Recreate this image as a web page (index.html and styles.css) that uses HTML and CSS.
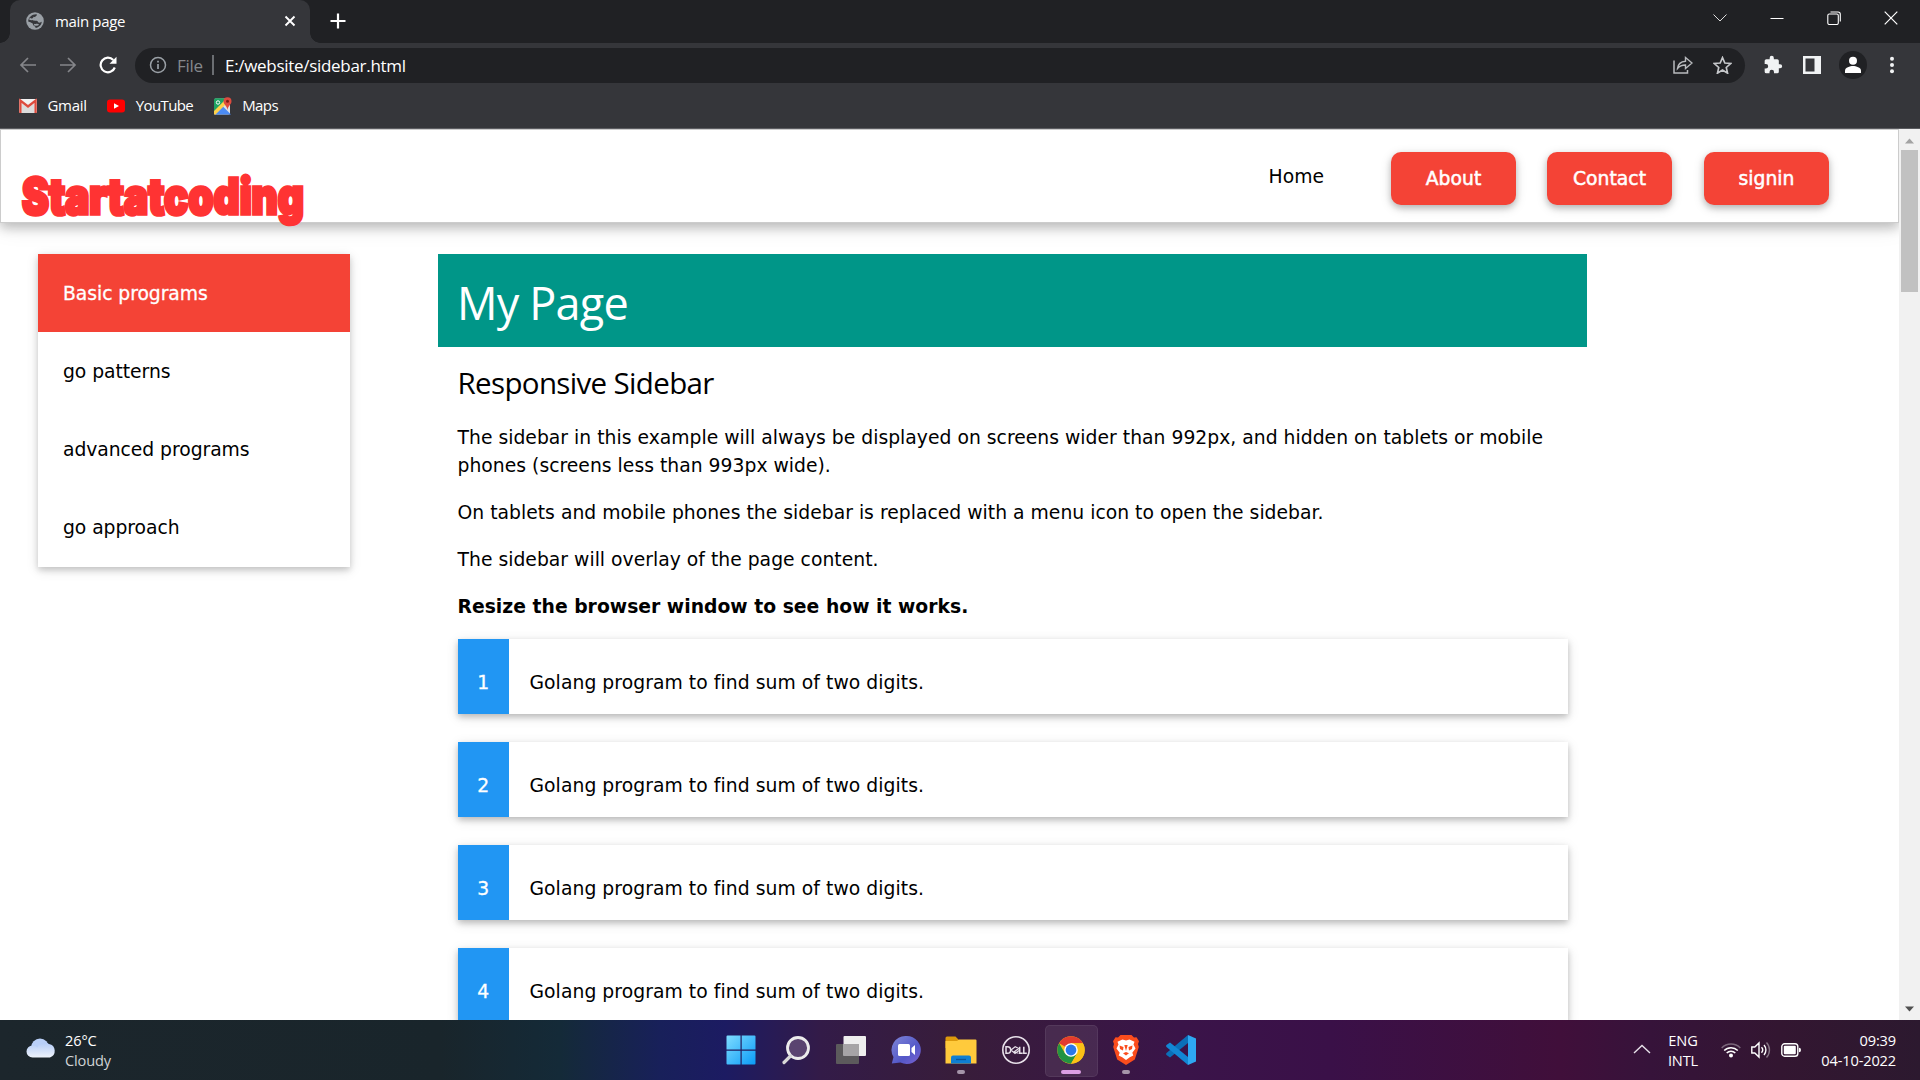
FILE: index.html
```html
<!DOCTYPE html>
<html lang="en">
<head>
<meta charset="utf-8">
<title>main page</title>
<link rel="stylesheet" href="styles.css">
</head>
<body>
<div class="tabstrip">
  <div class="tab">
    <svg class="globe" width="18" height="18" viewBox="0 0 18 18"><circle cx="9" cy="9" r="8.800" fill="#9aa0a6"/><path d="M10.500 2.200C12 3.500 9 4 9 5.500 9 6.800 6.800 6.200 6.500 8 6.800 9.200 11 8 11.800 9.500 12.500 11.500 15 10.500 15.800 9.500 15.500 13 13 15.500 9.500 15.900 10 14 7.500 14.500 7 12.500 6.800 10.500 4 10.500 2.200 9.500 2.200 5.500 6 2 10.500 2.200z" fill="#35363a"/><path d="M3.500 6.500C5 8 8 7.500 8.500 5M8 12.500c2 1 3-.5 4.500.5" fill="none" stroke="#9aa0a6" stroke-width="1.800"/></svg>
    <span class="tab-title">main page</span>
    <svg class="close" width="12" height="12" viewBox="0 0 12 12"><path d="M1.500 1.500l9 9M10.500 1.500l-9 9" stroke="#fff" stroke-width="1.900"/></svg>
  </div>
  <svg class="plus" width="16" height="16" viewBox="0 0 16 16"><path d="M8 .5v15M.5 8h15" stroke="#fff" stroke-width="2.200"/></svg>
  <div class="window-controls">
    <svg width="14" height="14" viewBox="0 0 14 14"><path d="M.5 3.500l6.500 6.500 6.500-6.500" stroke="#ddd" fill="none"/></svg>
    <svg width="14" height="14" viewBox="0 0 14 14"><path d="M.5 7.500h13" stroke="#fff"/></svg>
    <svg width="14" height="14" viewBox="0 0 14 14"><rect x=".8" y="3" width="10.500" height="10.500" rx="1.500" fill="none" stroke="#fff" stroke-width="1.100"/><path d="M3.500 1h7.500a2.300 2.300 0 0 1 2.300 2.300V10.500" fill="none" stroke="#fff" stroke-width="1.100"/></svg>
    <svg width="14" height="14" viewBox="0 0 14 14"><path d="M.7 .7l12.600 12.600M13.300 .7L.7 13.300" stroke="#fff" stroke-width="1.200"/></svg>
  </div>
</div>
<div class="toolbar">
  <div class="nav-icons">
    <svg width="18" height="18" viewBox="0 0 18 18"><path d="M17 9H2M9 2L2 9l7 7" fill="none" stroke="#85868a" stroke-width="1.700"/></svg>
    <svg width="18" height="18" viewBox="0 0 18 18"><path d="M1 9h15M9 2l7 7-7 7" fill="none" stroke="#85868a" stroke-width="1.700"/></svg>
    <svg width="18" height="18" viewBox="0 0 18 18"><path d="M15.800 11.500A7.300 7.300 0 1 1 14.300 4" fill="none" stroke="#fff" stroke-width="2.200"/><path d="M17.500 .8v7h-7z" fill="#fff"/></svg>
  </div>
  <div class="omnibox">
    <svg width="18" height="18" viewBox="0 0 18 18"><circle cx="9" cy="9" r="7.500" fill="none" stroke="#9aa0a6" stroke-width="1.500"/><path d="M9 8v5M9 4.800v1.700" stroke="#9aa0a6" stroke-width="1.700"/></svg>
    <span class="scheme">File</span><span class="bar"></span><span class="url">E:/website/sidebar.html</span>
    <svg class="share" width="20" height="18" viewBox="0 0 20 18"><path d="M1 4.500V17h13.500v-3" fill="none" stroke="#b8babd" stroke-width="1.500"/><path d="M4.500 12.500C5 8 8.500 5.500 12.500 5.200V1.500L19 7l-6.500 5.500V9C9 9 6.500 10 4.500 12.500z" fill="none" stroke="#b8babd" stroke-width="1.400"/></svg>
    <svg width="19" height="18" viewBox="0 0 24 23"><path d="M12 2l3 7 7.500.6-5.700 5 1.700 7.400L12 18l-6.500 4 1.700-7.400-5.700-5L9 9z" fill="none" stroke="#c5c7ca" stroke-width="2.100"/></svg>
  </div>
  <div class="actions">
    <svg width="20" height="20" viewBox="0 0 24 24"><path d="M20.500 11H19V7a2 2 0 0 0-2-2h-4V3.500a2.500 2.500 0 0 0-5 0V5H4a2 2 0 0 0-2 2v3.800h1.500a2.700 2.700 0 0 1 0 5.400H2V20a2 2 0 0 0 2 2h3.800v-1.500a2.700 2.700 0 0 1 5.400 0V22H17a2 2 0 0 0 2-2v-4h1.500a2.500 2.500 0 0 0 0-5z" fill="#f1f3f4"/></svg>
    <svg width="18" height="18" viewBox="0 0 18 18"><rect width="18" height="18" fill="#f1f3f4"/><rect x="2.500" y="2.500" width="9" height="13" fill="#35363a"/></svg>
    <svg width="28" height="28" viewBox="0 0 28 28"><circle cx="14" cy="14" r="14" fill="#202124"/><circle cx="14" cy="9.800" r="4" fill="#fff"/><path d="M6 22v-2.500c0-3 5-4.500 8-4.500s8 1.500 8 4.500V22z" fill="#fff"/></svg>
    <svg width="6" height="18" viewBox="0 0 6 18"><g fill="#f1f3f4"><circle cx="3" cy="2.800" r="2"/><circle cx="3" cy="9" r="2"/><circle cx="3" cy="15.200" r="2"/></g></svg>
  </div>
</div>
<div class="bookmarks">
  <div class="bookmark"><svg width="18" height="18" viewBox="0 0 18 18"><rect y="2" width="18" height="14" rx="1.200" fill="#f2f2f2"/><path d="M2.500 16V6L9 11l6.500-5v10" fill="#dcdcdc"/><path d="M1.400 16V3.500L9 9.500l7.600-6V16" fill="none" stroke="#dd4b3e" stroke-width="2.300"/></svg><span class="gm">Gmail</span></div>
  <div class="bookmark"><svg width="18" height="18" viewBox="0 0 18 18"><rect y="2.500" width="18" height="13" rx="3" fill="#f00"/><path d="M7 6.200L12 9l-5 2.800z" fill="#fff"/></svg><span>YouTube</span></div>
  <div class="bookmark"><svg width="18" height="18" viewBox="0 0 18 18"><rect y="1.500" width="16" height="16" rx="1.500" fill="#dfe1e4"/><path d="M0 3q0-1.500 1.500-1.500H13L0 15z" fill="#1fa463"/><path d="M1 17.500l8-8 8 8z" fill="#4b8bf4"/><path d="M0 14L11 3l2.500 2.500L1.500 17.500H0z" fill="#ffd04b"/><path d="M0 3q0-1.500 1.500-1.500H10L0 12z" fill="#1fa463"/><circle cx="4" cy="5.500" r="1.700" fill="none" stroke="#fff"/><path d="M13.500 13C13 8.500 9.500 7.500 9.500 4.200a4 4 0 0 1 8 0C17.500 7.500 14 8.500 13.500 13z" fill="#dd4b3e"/><circle cx="13.500" cy="4.200" r="1.500" fill="#7c1f17"/></svg><span>Maps</span></div>
</div>
<div class="viewport">
  <div class="page">
    <header class="site-header">
      <div class="logo">Startatcoding</div>
      <nav class="site-nav"><a class="home">Home</a><a class="btn">About</a><a class="btn">Contact</a><a class="btn">signin</a></nav>
    </header>
    <div class="columns">
      <aside class="sidebar"><a class="item active">Basic programs</a><a class="item">go patterns</a><a class="item">advanced programs</a><a class="item">go approach</a></aside>
      <main class="main">
        <div class="banner"><h1>My Page</h1></div>
        <div class="content">
          <h3>Responsive Sidebar</h3>
          <p>The sidebar in this example will always be displayed on screens wider than 992px, and hidden on tablets or mobile<br>phones (screens less than 993px wide).</p>
          <p>On tablets and mobile phones the sidebar is replaced with a menu icon to open the sidebar.</p>
          <p>The sidebar will overlay of the page content.</p>
          <p class="strong">Resize the browser window to see how it works.</p>
          <div class="cards">
            <div class="card"><span class="num">1</span><span class="label">Golang program to find sum of two digits.</span></div>
            <div class="card"><span class="num">2</span><span class="label">Golang program to find sum of two digits.</span></div>
            <div class="card"><span class="num">3</span><span class="label">Golang program to find sum of two digits.</span></div>
            <div class="card"><span class="num">4</span><span class="label">Golang program to find sum of two digits.</span></div>
          </div>
        </div>
      </main>
    </div>
  </div>
  <div class="scrollbar">
    <svg width="21" height="21" viewBox="0 0 21 21"><path d="M6 14.500l4.500-5 4.500 5z" fill="#a3a3a3"/></svg>
    <div class="thumb"></div>
    <svg width="21" height="21" viewBox="0 0 21 21"><path d="M6 7.500l4.500 5 4.500-5z" fill="#505050"/></svg>
  </div>
</div>
<div class="taskbar">
  <div class="weather">
    <svg width="30" height="20" viewBox="0 0 30 20"><defs><linearGradient id="cl" x1="0" y1="0" x2="0" y2="1"><stop offset="0" stop-color="#b3cbf7"/><stop offset="1" stop-color="#eef3fb"/></linearGradient></defs><circle cx="14" cy="9.500" r="9" fill="#b9cff8"/><path d="M6.500 7.500a7 7 0 0 1 5 2A7.500 7.500 0 0 1 23 6a7 7 0 0 1 1 13.500H6.500a6 6 0 0 1 0-12z" fill="url(#cl)"/></svg>
    <div class="two"><span>26°C</span><span class="dim">Cloudy</span></div>
  </div>
  <div class="apps">
    <div class="app"><svg width="30" height="30" viewBox="0 0 30 30"><defs><linearGradient id="wn" x1="0" y1="0" x2="1" y2="1"><stop offset="0" stop-color="#7fdcff"/><stop offset="1" stop-color="#0a9bf7"/></linearGradient></defs><path d="M.5 1.500a1 1 0 0 1 1-1h13v14H.5zM15.700.5h12.800a1 1 0 0 1 1 1v13H15.700zM.5 15.700h14v13.800h-13a1 1 0 0 1-1-1zM15.700 15.700h13.800v12.800a1 1 0 0 1-1 1H15.700z" fill="url(#wn)"/></svg></div>
    <div class="app"><svg width="30" height="30" viewBox="0 0 30 30"><circle cx="17" cy="13" r="10.500" fill="#5a4470" stroke="#ececec" stroke-width="2.800"/><path d="M9.500 21L3 27.500" stroke="#d8d8d8" stroke-width="3.200" stroke-linecap="round"/></svg></div>
    <div class="app"><svg width="30" height="30" viewBox="0 0 30 30"><rect x="0" y="9" width="23" height="20" rx="1" fill="#5c5a5c"/><rect x="7.500" y="1" width="22.500" height="20" rx="1" fill="#eee"/><path d="M7.500 9H23v12H7.500z" fill="#a6a4a6"/></svg></div>
    <div class="app"><svg width="30" height="30" viewBox="0 0 30 30"><defs><linearGradient id="ch" x1="0" y1="0" x2="1" y2="1"><stop offset="0" stop-color="#7f86d8"/><stop offset=".6" stop-color="#5458c8"/><stop offset="1" stop-color="#7b62d0"/></linearGradient></defs><path d="M15.500 1a14 14 0 1 1-6 26.500L.8 28.500 2.500 22A14 14 0 0 1 15.500 1z" fill="url(#ch)"/><rect x="7" y="9" width="12" height="12" rx="1.500" fill="#fff"/><path d="M20.500 13l3.500-3v10l-3.500-3z" fill="#fff"/></svg></div>
    <div class="app"><svg width="32" height="30" viewBox="0 0 32 30"><path d="M.5 3q0-1.500 1.500-1.500h8.500L14 5H31v8H.5z" fill="#dd9a0c"/><path d="M.5 6H12l2-1.500h16.500q1 0 1 1V28.500H.5z" fill="#ffca3c"/><path d="M6 28.500V22.500q0-2 2-2h16q2 0 2 2v6z" fill="#0f7fd3"/><path d="M11 24.500h10" stroke="#0a559c" stroke-width="1.300"/></svg><i class="dot"></i></div>
    <div class="app"><svg width="30" height="30" viewBox="0 0 30 30"><circle cx="15" cy="15" r="13.200" fill="none" stroke="#e8e1ea" stroke-width="1.600"/><path d="M5 11.700v6.600h1.400a3.300 3.300 0 0 0 0-6.600zM18.700 11.700v6.600h3M22.800 11.700v6.600h3" fill="none" stroke="#e8e1ea" stroke-width="1.500"/><path d="M10 15l4.200-3.200 3.600 1.700-4.600 3.300 4.400 1.400M10 15l4 3.500 4-3" fill="none" stroke="#e8e1ea" stroke-width="1.200"/></svg></div>
    <div class="app current"><svg width="28" height="28" viewBox="0 0 28 28"><circle cx="14" cy="14" r="13.700" fill="#fbc116"/><path d="M14 14L2.100 7.200A13.700 13.700 0 0 1 25.900 7.200H14z" fill="#e33b2e"/><path d="M14 14l-5.900 3.400L2.100 7.200a13.700 13.700 0 0 0 11.900 20.500l6-10.300z" fill="#229342"/><path d="M14 14V7.200h11.900A13.700 13.700 0 0 1 14 27.700l6-10.300z" fill="#fbc116"/><circle cx="14" cy="14" r="6.800" fill="#fff"/><circle cx="14" cy="14" r="5.400" fill="#2a78ea"/></svg><i class="dot wide"></i></div>
    <div class="app"><svg width="28" height="30" viewBox="0 0 28 30"><path d="M8.500 0h11L22 2.500l2.500-.3 2.500 4L26 9l.8 3-4 12.500L14 30l-8.800-5.500L1.200 12 2 9 1 6.200l2.500-4 2.500.3z" fill="#fb4d1d"/><path d="M14 5.500l3.500-.9 5 2.200-1 2.600 2 4-3.200 4.300 1 2.800-3.500 1.700L14 25l-3.800-2.800-3.500-1.700 1-2.800L4.500 13.400l2-4-1-2.600 5-2.200z" fill="#fff"/><path d="M7.500 10.500l4 1.500-.5 3.500-3-1.500zM20.500 10.500l-4 1.500.5 3.500 3-1.500zM12.300 10h3.400L14 16zM11 18.300l3-1.300 3 1.300-3 2.300z" fill="#fb4d1d"/></svg><i class="dot"></i></div>
    <div class="app"><svg width="30" height="30" viewBox="0 0 30 30"><path d="M22 0v8L4 22.500 .5 20q-.8-1 0-2z" fill="#0b6fb8"/><path d="M22 30v-8L4 7.500.5 10q-.8 1 0 2z" fill="#1287d4"/><path d="M22 0l8 3.500v23L22 30z" fill="#2ea8f2"/></svg></div>
  </div>
  <div class="tray">
    <svg class="chev" width="18" height="10" viewBox="0 0 18 10"><path d="M1 9l8-7.500L17 9" fill="none" stroke="#e8e2ea" stroke-width="1.400"/></svg>
    <div class="two center lang"><span>ENG</span><span>INTL</span></div>
    <svg class="wifi" width="20" height="16" viewBox="0 0 20 16"><g fill="none" stroke="#fff" stroke-width="1.500"><path d="M.7 6a13 13 0 0 1 18.600 0" opacity=".35"/><path d="M3.200 8.500a9.500 9.500 0 0 1 13.600 0M5.700 11a6 6 0 0 1 8.600 0"/></g><circle cx="10" cy="13.500" r="2" fill="#fff"/></svg>
    <svg class="vol" width="20" height="18" viewBox="0 0 20 18"><g fill="none" stroke="#fff" stroke-width="1.400"><path d="M.8 6v6h3l4.200 4V2L3.800 6zM10.500 6.300a4 4 0 0 1 0 5.400M13 4a7.500 7.500 0 0 1 0 10"/><path d="M15.500 1.500a11 11 0 0 1 0 15" opacity=".4"/></g></svg>
    <svg class="bat" width="20" height="14" viewBox="0 0 20 14"><rect x=".8" y=".8" width="16" height="12.400" rx="2.800" fill="none" stroke="#fff" stroke-width="1.400"/><rect x="2.800" y="2.800" width="12" height="8.400" rx="1" fill="#fff"/><path d="M18 4.800q2 0 2 2.200t-2 2.200z" fill="#fff"/></svg>
    <div class="two right clock"><span>09:39</span><span>04-10-2022</span></div>
  </div>
</div>
</body>
</html>
```
FILE: styles.css
```css
* { box-sizing: border-box; }
html, body { margin: 0; height: 100%; overflow: hidden; }
body { display: flex; flex-direction: column; width: 1920px; height: 1080px; background: #fff; font-family: "Open Sans", "Noto Sans", sans-serif; }
svg { display: block; flex: none; }

/* browser frame */
.tabstrip { flex: none; display: flex; align-items: flex-start; height: 43px; padding-left: 10px; background: #202124; }
.tab { position: relative; display: flex; align-items: center; width: 300px; height: 43px; padding: 0 14px 1px 16px; border-radius: 10px 10px 0 0; background: #35363a; color: #fff; }
.tab::before, .tab::after { content: ""; position: absolute; bottom: 0; width: 10px; height: 10px; }
.tab::before { left: -10px; background: radial-gradient(circle at 0 0, #202124 9.500px, #35363a 10px); }
.tab::after { right: -10px; background: radial-gradient(circle at 100% 0, #202124 9.500px, #35363a 10px); }
.tab-title { flex: 1; margin-left: 11px; padding-bottom: 1px; font-size: 15px; letter-spacing: -.35px; line-height: 20px; }
.plus { margin: 13px 0 0 20px; }
.window-controls { display: flex; gap: 43px; margin: 11px 22px 0 auto; }
.toolbar { flex: none; display: flex; align-items: center; height: 44px; background: #35363a; }
.nav-icons { display: flex; gap: 22px; width: 135px; padding-left: 19px; }
.omnibox { display: flex; align-items: center; width: 1610px; height: 35px; padding: 0 13px 0 14px; border-radius: 18px; background: #202124; font-size: 17px; color: #fff; }
.scheme { margin-left: 10px; width: 35px; color: #85888c; letter-spacing: -.3px; }
.bar { width: 2px; height: 20px; background: #6b6e72; }
.url { flex: 1; margin-left: 11px; letter-spacing: -.3px; }
.share { margin-right: 20px; }
.actions { display: flex; align-items: center; margin-left: 18px; }
.actions svg:nth-child(2) { margin-left: 20px; }
.actions svg:nth-child(3) { margin-left: 18px; }
.actions svg:nth-child(4) { margin-left: 22px; }
.bookmarks { flex: none; display: flex; height: 42px; padding-left: 19px; background: #35363a; border-bottom: 1px solid #5b5c60; color: #fff; font-size: 15px; line-height: 20px; letter-spacing: -.6px; }
.bookmark { display: flex; align-items: center; gap: 10.500px; height: 38px; margin-right: 20.500px; }
.bookmark span { padding-bottom: 2px; }
.bookmark .gm { letter-spacing: -.3px; }

/* web page */
.viewport { flex: none; display: flex; height: 891px; overflow: hidden; font-family: "DejaVu Sans", Verdana, sans-serif; font-size: 18.750px; line-height: 28.125px; letter-spacing: .02px; color: #000; }
.page { width: 1899px; }
.site-header { display: flex; justify-content: space-between; height: 94px; border: 1px solid #ccc; box-shadow: 0 5px 10px rgba(0,0,0,.2), 0 5px 20px rgba(0,0,0,.1); }
.logo { width: 290px; margin: 36px 0 0 21px; font: 900 50px/60px Inter, sans-serif; color: #f33; letter-spacing: 0; -webkit-text-stroke: 3.600px #f33; transform: scale(.808, .98); transform-origin: 0 50%; white-space: nowrap; }
.site-nav { display: flex; align-items: flex-start; gap: 31px; padding: 22px 69px 0 0; }
.home { margin: 11px 36px 0 0; }
.btn { width: 125px; height: 53px; border-radius: 10px; background: #f44336; color: #fff; line-height: 54px; text-align: center; -webkit-text-stroke: .5px #fff; box-shadow: 0 3px 6px rgba(0,0,0,.2), 0 3px 12px rgba(0,0,0,.14); }
.btn:last-child { margin-left: 1px; }
.columns { display: flex; padding: 31px 0 0 38px; }
.sidebar { display: flex; flex-direction: column; align-self: flex-start; width: 312px; height: 313px; box-shadow: 0 2.500px 6px rgba(0,0,0,.16), 0 2.500px 12px rgba(0,0,0,.12); }
.item { padding: 26px 25px 24px; height: 78px; letter-spacing: -.05px; }
.item.active { background: #f44336; color: #fff; -webkit-text-stroke: .3px #fff; }
.main { width: 1149px; margin-left: 88px; }
.banner { height: 93px; padding: 15px 19px; background: #009688; color: #fff; }
h1, h3 { margin: 0; font-family: "Open Sans", sans-serif; font-weight: 400; }
h1 { font-size: 45px; line-height: 67.500px; letter-spacing: -.8px; }
.content { padding: 12.500px 19.500px; }
h3 { font-size: 29.500px; line-height: 45px; letter-spacing: -.65px; }
p { position: relative; top: 1px; margin: 18.750px 0 0; white-space: nowrap; }
.strong { font-weight: 700; }
.cards { display: flex; flex-direction: column; gap: 28px; margin-top: 18.750px; }
.card { display: flex; height: 75px; box-shadow: 0 2.500px 6px rgba(0,0,0,.2), 0 2.500px 12px rgba(0,0,0,.12); }
.num { width: 51.500px; padding-top: 30px; background: #2196f3; color: #fff; text-align: center; -webkit-text-stroke: .3px #fff; }
.label { padding: 30px 0 0 20.500px; letter-spacing: .06px; }
.scrollbar { display: flex; flex-direction: column; align-items: center; width: 21px; background: #f1f1f1; }
.thumb { width: 17px; height: 142px; margin-bottom: auto; background: #c1c1c1; }

/* taskbar */
.taskbar { flex: none; display: flex; height: 60px; color: #fff; font-size: 14.600px; line-height: 20px; letter-spacing: -.15px; background: linear-gradient(90deg, #1c262c 0, #19252b 440px, #142a38 560px, #18205a 660px, #1c1b62 725px, #331b48 820px, #381d3a 960px, #3a1449 1180px, #3a1048 1330px, #400f3a 1560px, #36133a 1650px, #331631 1780px, #2c192f 1920px); }
.weather { display: flex; gap: 9px; width: 713px; padding: 10px 0 0 26px; }
.weather svg { margin-top: 8px; }
.two { display: flex; flex-direction: column; }
.dim { color: #d0d3d5; }
.center { align-items: center; }
.right { align-items: flex-end; }
.apps { display: flex; }
.app { position: relative; display: flex; align-items: center; justify-content: center; width: 55px; height: 60px; }
.current::before { content: ""; position: absolute; left: 2px; top: 5px; width: 51px; height: 50px; border-radius: 5px; background: rgba(255,255,255,.08); border: 1px solid rgba(255,255,255,.07); }
.current svg { position: relative; }
.dot { position: absolute; left: 50%; bottom: 6px; width: 8px; height: 4px; margin-left: -4px; border-radius: 2px; background: #a595a9; }
.dot.wide { width: 20px; margin-left: -10px; background: #dc9fe4; }
.tray { display: flex; align-items: flex-start; margin-left: auto; padding: 10px 24px 0 0; }
.chev { margin-top: 14px; }
.lang { margin-left: 15px; width: 34px; }
.wifi { margin: 12px 0 0 21px; }
.vol { margin: 11px 0 0 10px; }
.bat { margin: 13px 0 0 10px; }
.clock { width: 95px; }
```
